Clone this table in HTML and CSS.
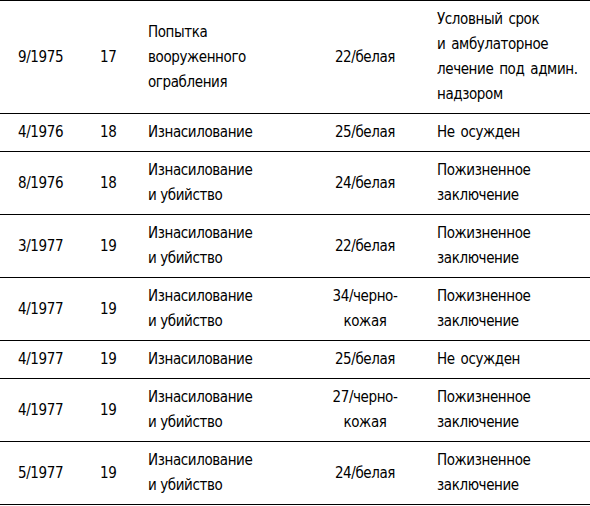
FILE: index.html
```html
<!DOCTYPE html>
<html lang="ru">
<head>
<meta charset="utf-8">
<link rel="stylesheet" href="styles.css">
</head>
<body>
<table class="cases">
  <colgroup>
    <col class="c-date"><col class="c-age"><col class="c-crime"><col class="c-victim"><col class="c-verdict">
  </colgroup>
  <tbody>
    <tr>
      <td>9/1975</td><td>17</td>
      <td>Попытка<br>вооруженного<br>ограбления</td>
      <td class="victim">22/белая</td>
      <td class="verdict">Условный срок<br>и амбулаторное<br>лечение под админ.<br>надзором</td>
    </tr>
    <tr>
      <td>4/1976</td><td>18</td>
      <td>Изнасилование</td>
      <td class="victim">25/белая</td>
      <td class="verdict">Не осужден</td>
    </tr>
    <tr>
      <td>8/1976</td><td>18</td>
      <td>Изнасилование<br>и убийство</td>
      <td class="victim">24/белая</td>
      <td class="verdict">Пожизненное<br>заключение</td>
    </tr>
    <tr>
      <td>3/1977</td><td>19</td>
      <td>Изнасилование<br>и убийство</td>
      <td class="victim">22/белая</td>
      <td class="verdict">Пожизненное<br>заключение</td>
    </tr>
    <tr>
      <td>4/1977</td><td>19</td>
      <td>Изнасилование<br>и убийство</td>
      <td class="victim">34/черно-<br>кожая</td>
      <td class="verdict">Пожизненное<br>заключение</td>
    </tr>
    <tr>
      <td>4/1977</td><td>19</td>
      <td>Изнасилование</td>
      <td class="victim">25/белая</td>
      <td class="verdict">Не осужден</td>
    </tr>
    <tr>
      <td>4/1977</td><td>19</td>
      <td>Изнасилование<br>и убийство</td>
      <td class="victim">27/черно-<br>кожая</td>
      <td class="verdict">Пожизненное<br>заключение</td>
    </tr>
    <tr>
      <td>5/1977</td><td>19</td>
      <td>Изнасилование<br>и убийство</td>
      <td class="victim">24/белая</td>
      <td class="verdict">Пожизненное<br>заключение</td>
    </tr>
  </tbody>
</table>
</body>
</html>
```

FILE: styles.css
```css
html, body {
  margin: 0;
  padding: 0;
  background: #ffffff;
}

.cases {
  width: 590px;
  border-collapse: collapse;
  table-layout: fixed;
  font-family: "Liberation Sans Narrow", "DejaVu Sans Condensed", "Liberation Sans", sans-serif;
  font-size: 15px;
  letter-spacing: -0.4px;
  line-height: 25px;
  color: #000;
}

.c-date { width: 82px; }
.c-age { width: 48px; }
.c-crime { width: 175px; }
.c-victim { width: 120px; }
.c-verdict { width: 165px; }

.cases td {
  border-top: 1px solid #000;
  border-bottom: 1px solid #000;
  padding: 6px 0 6px 18px;
  vertical-align: middle;
  text-align: left;
  white-space: nowrap;
}

.cases td.victim {
  text-align: center;
  padding-left: 0;
}

.cases td.verdict {
  padding-left: 12px;
  word-spacing: 2px;
}
```
